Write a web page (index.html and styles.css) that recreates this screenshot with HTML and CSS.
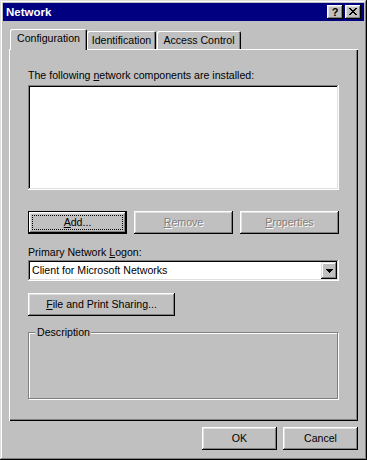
FILE: index.html
```html
<!DOCTYPE html>
<html>
<head>
<meta charset="utf-8">
<title>Network</title>
<link rel="stylesheet" href="styles.css">
</head>
<body>
<div class="window">
  <div class="titlebar">
    <span class="title">Network</span>
    <div class="tb-buttons">
      <span class="tb-btn help">?</span>
      <span class="tb-btn close"><svg width="8" height="7" viewBox="0 0 8 7" shape-rendering="crispEdges"><path d="M0 0h2v1H0zM6 0h2v1H6zM1 1h2v1H1zM5 1h2v1H5zM2 2h4v1H2zM3 3h2v1H3zM2 4h4v1H2zM1 5h2v1H1zM5 5h2v1H5zM0 6h2v1H0zM6 6h2v1H6z" fill="#000"/></svg></span>
    </div>
  </div>
  <div class="body">
    <div class="tabs">
      <div class="tab active">Configuration</div>
      <div class="tab t-ident">Identification</div>
      <div class="tab t-access">Access Control</div>
    </div>
    <div class="panel">
      <div class="label">The following <u>n</u>etwork components are installed:</div>
      <div class="listbox"></div>
      <div class="btn-row">
        <div class="btn default"><span class="focus"><u>A</u>dd...</span></div>
        <div class="btn disabled"><u>R</u>emove</div>
        <div class="btn disabled"><u>P</u>roperties</div>
      </div>
      <div class="label label2">Primary Network <u>L</u>ogon:</div>
      <div class="combo">
        <span class="combo-text">Client for Microsoft Networks</span>
        <span class="combo-btn"><svg width="7" height="4" viewBox="0 0 7 4" shape-rendering="crispEdges"><path d="M0 0h7v1H0zM1 1h5v1H1zM2 2h3v1H2zM3 3h1v1H3z" fill="#000"/></svg></span>
      </div>
      <div class="btn file"><u>F</u>ile and Print Sharing...</div>
      <div class="group"><span class="legend">Description</span></div>
    </div>
    <div class="footer">
      <div class="btn dlg">OK</div>
      <div class="btn dlg">Cancel</div>
    </div>
  </div>
</div>
</body>
</html>
```
FILE: styles.css
```css
* { box-sizing: border-box; }
html, body { margin: 0; padding: 0; }
body {
  width: 367px;
  height: 460px;
  background: #c0c0c0;
  font-family: "Liberation Sans", Arial, sans-serif;
  font-size: 10.6px;
  line-height: 13px;
  color: #000;
  overflow: hidden;
}
u { text-underline-offset: 1px; }

.window {
  width: 367px;
  height: 460px;
  background: #c0c0c0;
  padding: 3px;
  display: flex;
  flex-direction: column;
  box-shadow: inset -1px -1px #000, inset 1px 1px #dfdfdf, inset -2px -2px #808080, inset 2px 2px #fff;
}

.titlebar {
  height: 18px;
  flex: none;
  background: #000080;
  display: flex;
  align-items: center;
  justify-content: space-between;
  padding: 0 3px 0 3px;
}
.title {
  color: #fff;
  font-weight: bold;
  font-size: 11.5px;
}
.tb-buttons { display: flex; gap: 2px; }
.tb-btn {
  width: 16px;
  height: 14px;
  background: #c0c0c0;
  display: flex;
  align-items: center;
  justify-content: center;
  box-shadow: inset -1px -1px #000, inset 1px 1px #fff, inset -2px -2px #808080, inset 2px 2px #dfdfdf;
}
.help {
  font-weight: bold;
  font-size: 11px;
  line-height: 14px;
  padding-bottom: 1px;
}
.close svg { display: block; margin-top: -1px; }

.body {
  flex: 1;
  padding: 8px 6px 0 6px;
  display: flex;
  flex-direction: column;
}

.tabs {
  height: 20px;
  flex: none;
  display: flex;
  align-items: flex-end;
}
.tab {
  height: 18px;
  padding-top: 3px;
  text-align: center;
  background: #c0c0c0;
  border-radius: 2px 2px 0 0;
  box-shadow: inset 1px 1px #fff, inset -1px 0 #000, inset -2px 0 #808080;
}
.tab.active {
  position: relative;
  z-index: 1;
  width: 77px;
  height: 21px;
  margin-left: 1px;
  margin-bottom: -1px;
  padding-top: 3px;
}
.t-ident { width: 69px; }
.t-access { width: 84px; margin-left: 1px; }

.panel {
  height: 372px;
  flex: none;
  padding: 20px 19px 0 19px;
  display: flex;
  flex-direction: column;
  box-shadow: inset 1px 1px #fff, inset -1px -1px #000, inset -2px -2px #808080;
}

.label { height: 13px; margin-bottom: 3px; white-space: nowrap; }
.label2 { margin-top: 12px; margin-bottom: 1px; }

.listbox {
  height: 105px;
  background: #fff;
  box-shadow: inset -1px -1px #fff, inset 1px 1px #808080, inset -2px -2px #dfdfdf, inset 2px 2px #000;
}

.btn {
  height: 23px;
  display: flex;
  align-items: center;
  justify-content: center;
  background: #c0c0c0;
  white-space: nowrap;
  box-shadow: inset -1px -1px #000, inset 1px 1px #fff, inset -2px -2px #808080, inset 2px 2px #dfdfdf;
}
.btn-row {
  margin-top: 21px;
  display: flex;
  gap: 7px;
}
.btn-row .btn { flex: 0 0 99px; }
.btn.default {
  border: 1px solid #000;
  padding: 3px;
  box-shadow: inset -1px -1px #000, inset 1px 1px #fff, inset -2px -2px #808080, inset 2px 2px #dfdfdf;
}
.focus {
  flex: 1;
  align-self: stretch;
  border: 1px dotted #000;
  display: flex;
  align-items: center;
  justify-content: center;
}
.btn.disabled {
  color: #808080;
  text-shadow: 1px 1px 0 #fff;
}

.combo {
  height: 21px;
  padding: 2px;
  display: flex;
  align-items: center;
  background: #fff;
  box-shadow: inset -1px -1px #fff, inset 1px 1px #808080, inset -2px -2px #dfdfdf, inset 2px 2px #000;
}
.combo-text { flex: 1; padding-left: 2px; white-space: nowrap; }
.combo-btn {
  width: 16px;
  height: 17px;
  background: #c0c0c0;
  display: flex;
  align-items: center;
  justify-content: center;
  box-shadow: inset -1px -1px #000, inset 1px 1px #dfdfdf, inset -2px -2px #808080, inset 2px 2px #fff;
}
.combo-btn svg { display: block; }

.btn.file {
  width: 147px;
  margin-top: 12px;
}

.group {
  margin-top: 16px;
  width: 310px;
  height: 67px;
  border: 1px solid #808080;
  box-shadow: 1px 1px 0 #fff, inset 1px 1px 0 #fff;
}
.legend {
  display: inline-block;
  margin-top: -7px;
  margin-left: 6px;
  padding: 0 1px 0 2px;
  background: #c0c0c0;
  vertical-align: top;
}

.footer {
  margin-top: 6px;
  display: flex;
  justify-content: flex-end;
  gap: 6px;
}
.btn.dlg { width: 75px; }
```
